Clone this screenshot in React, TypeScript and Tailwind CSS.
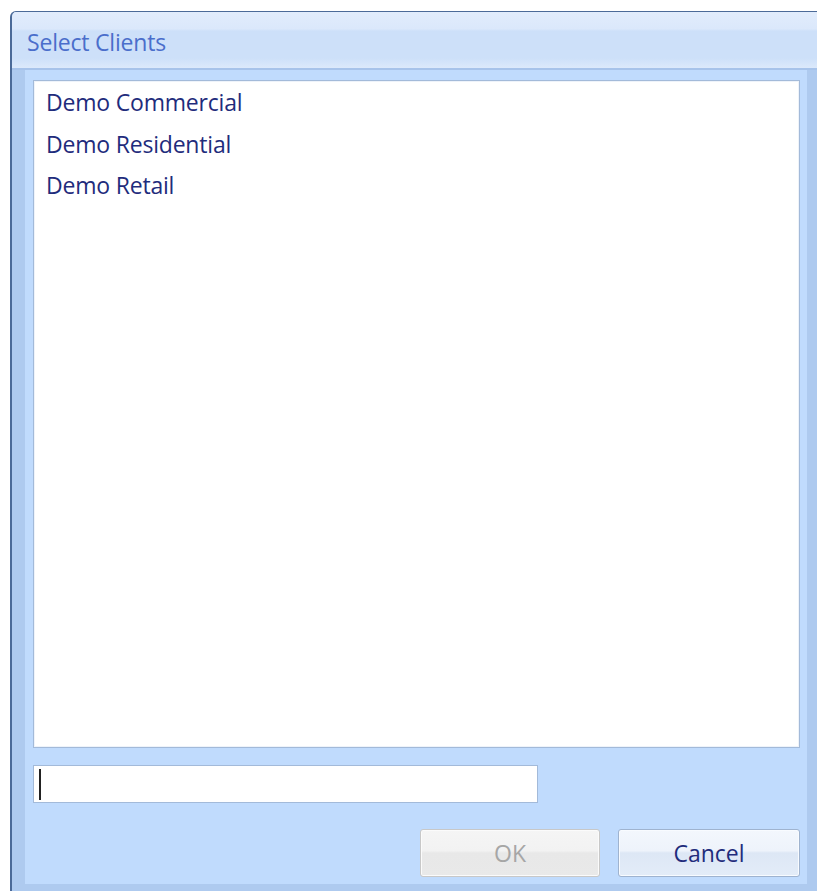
import { useState } from "react"

const clients = ["Demo Commercial", "Demo Residential", "Demo Retail"]

export default function App() {
  const [filter, setFilter] = useState("")

  return (
    <div
      className="w-[817px] h-[894px] overflow-hidden bg-white pt-[11px] pl-[10px]"
      style={{ fontFamily: '"Open Sans", "Noto Sans", sans-serif' }}
    >
      <div className="h-[880px] flex flex-col border-l-2 border-t border-[#4b6a98] rounded-tl-[6px] overflow-hidden bg-[#aecaef]">
        {/* Title bar */}
        <div className="h-[58px] shrink-0 flex items-center pl-[15px] pt-[4px] border-b-2 border-[#a7c3ea] bg-[linear-gradient(to_bottom,#e1ecfc_0%,#dbe8fb_30%,#cde0f9_34%,#cde0f9_82%,#dce9fb_100%)]">
          <span className="text-[23px] text-[#4a6ecb] tracking-[-0.2px]">Select Clients</span>
        </div>

        {/* Body */}
        <div className="flex-1 flex flex-col pl-[13px] pr-[10px] pb-[7px]">
          <div className="flex-1 flex flex-col bg-[#c0dbfd] pl-[8px] pr-[7px] pt-[10px] pb-[7px]">
            {/* Client list */}
            <div className="h-[668px] bg-white border border-[#a3bad9] shadow-[inset_0_0_0_1px_#eef3fa] pt-[6px] pl-[12px]">
              {clients.map((name) => (
                <div key={name} className="h-[41.5px] text-[23px] leading-[30px] text-[#1f2c7c] tracking-[-0.2px]">
                  {name}
                </div>
              ))}
            </div>

            {/* Filter box */}
            <div className="mt-[17px] w-[505px] h-[38px] bg-white border border-[#a3bad9] flex items-center pl-[5px]">
              <span className="w-[2px] h-[31px] bg-[#222]" />
              <input
                value={filter}
                onChange={(e) => setFilter(e.target.value)}
                className="flex-1 h-full outline-none bg-transparent text-[22px]"
              />
            </div>

            {/* Buttons */}
            <div className="mt-[26px] flex justify-end gap-[18px]">
              <button
                disabled
                className="w-[180px] h-[48px] rounded-[3px] border border-[#c8c8c8] bg-[linear-gradient(to_bottom,#f5f5f5_0%,#f2f2f2_45%,#e8e8e8_50%,#e9e9e9_100%)] text-[23px] text-[#a6a6a6] shadow-[inset_0_0_0_1px_#fbfbfb]"
              >
                OK
              </button>
              <button className="w-[182px] h-[48px] rounded-[3px] border border-[#9fb3cf] bg-[linear-gradient(to_bottom,#f3f7fd_0%,#eef3fb_45%,#dde7f5_50%,#e3ecf8_100%)] text-[23px] text-[#1f2c7c] shadow-[inset_0_0_0_1px_#f8fbff]">
                Cancel
              </button>
            </div>
          </div>
        </div>
      </div>
    </div>
  )
}
